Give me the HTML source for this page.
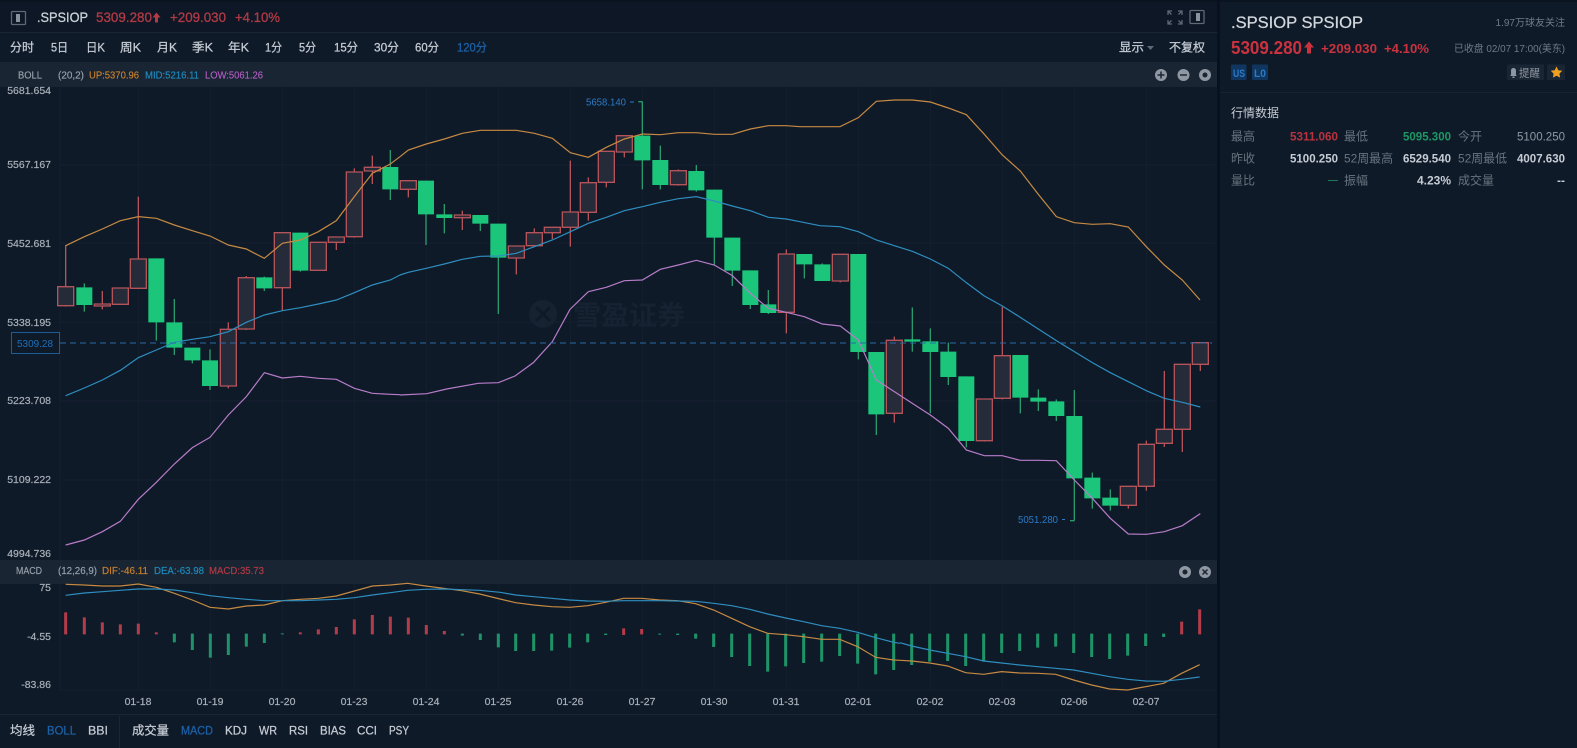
<!DOCTYPE html>
<html lang="zh"><head><meta charset="utf-8"><title>.SPSIOP</title>
<style>
html,body{margin:0;padding:0;background:#0f1a29;width:1577px;height:748px;overflow:hidden}
svg{display:block;filter:blur(.3px)}
text{font-family:"Liberation Sans","Noto Sans CJK SC",sans-serif}
.tab{font-size:12px;fill:#c6ccd4;stroke:#c6ccd4;stroke-width:.25}
.blue{fill:#1c62a8;stroke:#1c62a8}
.ax{font-size:10.5px;fill:#a7afb8;text-anchor:end;stroke:#a7afb8;stroke-width:.2}
.dt{font-size:10.5px;fill:#a7afb8;text-anchor:middle;stroke:#a7afb8;stroke-width:.2}
.lb{font-size:12px;fill:#69747f}
.v{font-size:12px;font-weight:bold;fill:#c6ccd4;text-anchor:end}
.ind{font-size:10px;stroke-width:.15}
.rw{fill:none;stroke:#b5535a;stroke-width:4}
.rb{fill:#262b39;stroke:#b5535a;stroke-width:4}
.gw{fill:none;stroke:#2a9a6c;stroke-width:4}
.gb{fill:none;stroke:#1bc67a;stroke-width:48}
.up{fill:none;stroke:#c68a42;stroke-width:3.6}
.mid{fill:none;stroke:#2e8ebf;stroke-width:3.6}
.low{fill:none;stroke:#b77cc8;stroke-width:3.6}
.mr{fill:none;stroke:#b43c4a;stroke-width:9}
.mg{fill:none;stroke:#1f9368;stroke-width:9}
</style></head><body>
<svg width="1577" height="748" viewBox="0 0 1577 748" xmlns="http://www.w3.org/2000/svg">
<rect width="1577" height="748" fill="#0f1a29"/>
<rect width="1217" height="32" fill="#0d1725"/>
<rect y="0" width="1577" height="2" fill="#0a1320"/>
<rect y="32" width="1217" height="1" fill="#1a2634"/>
<rect y="62" width="1217" height="25" fill="#1a2533"/>
<rect y="560" width="1217" height="24" fill="#1a2533"/>
<rect y="714" width="1217" height="1" fill="#1a2634"/>
<rect x="119" y="716" width="1" height="32" fill="#1a2634"/>
<rect x="1217" width="3" height="748" fill="#08111c"/>
<rect x="1220" y="92" width="357" height="1" fill="#172230"/>

<!-- grid -->
<path fill="none" stroke="#141f2e" d="M60 165H1215M60 243H1215M60 322H1215M60 401H1215M60 480H1215M60 690H1215M60 87V560M138.5 87V560M210.5 87V560M282.5 87V560M354.5 87V560M426.5 87V560M498.5 87V560M570.5 87V560M642.5 87V560M714.5 87V560M786.5 87V560M858.5 87V560M930.5 87V560M1002.5 87V560M1074.5 87V560M1146.5 87V560M60 584V690M138.5 584V690M210.5 584V690M282.5 584V690M354.5 584V690M426.5 584V690M498.5 584V690M570.5 584V690M642.5 584V690M714.5 584V690M786.5 584V690M858.5 584V690M930.5 584V690M1002.5 584V690M1074.5 584V690M1146.5 584V690"/>

<!-- watermark -->
<circle cx="543" cy="314" r="14" fill="#162131"/>
<path d="M536 307l14 14M550 307l-14 14" stroke="#0f1a29" stroke-width="3"/>
<text x="573" y="325" font-size="27" font-weight="bold" fill="#162131" textLength="112" lengthAdjust="spacingAndGlyphs">雪盈证券</text>

<!-- candles 0-18 -->
<g transform="translate(0,90) scale(.33333)">
<path class="rw" d="M197 465V650M307 603V658M361 594V645M415 320V595M685 697V895M739 558V720M847 428V662M955 457V541M1009 440V480M1063 235V443M1117 197V282"/>
<path class="gw" d="M253 580V665M469 505V752M523 627V795M577 773V820M630 778V900M793 560V603M901 428V545M1171 180V330"/>
<path class="rb" d="M173 590H221V647H173ZM283 642H331V648H283ZM337 594H385V643H337ZM391 507H439V595H391ZM661 718H709V888H661ZM715 563H763V717H715ZM823 428H871V593H823ZM931 457H979V541H931ZM985 441H1033V457H985ZM1039 246H1087V440H1039ZM1093 232H1141V243H1093Z"/>
<path class="gb" d="M253 592V645M469 505V697M523 697V773M577 773V811M630 811V888M793 562V595M901 428V542M1171 231V298"/>
</g>
<!-- candles 19-39 -->
<g transform="translate(400,90) scale(.33333)">
<path class="rw" d="M25 270V322M187 362V420M349 468V553M403 415V468M457 412V447M511 212V470M565 262V392M619 183V292M673 137V202M835 238V287"/>
<path class="gw" d="M78 272V465M133 342V430M241 375V423M295 401V672M727 35V298M781 167V298M889 225V305M943 299V525M997 443V588M1051 541V657M1105 600V672M715 35H727"/>
<path class="rb" d="M1 272H49V298H1ZM163 375H211V383H163ZM325 468H373V504H325ZM379 428H427V467H379ZM433 412H481V428H433ZM487 366H535V412H487ZM541 278H589V367H541ZM595 184H643V277H595ZM649 137H697V186H649ZM811 242H859V284H811Z"/>
<path class="gb" d="M78 272V373M133 373V384M241 375V401M295 401V503M727 137V211M781 210V285M889 243V301M943 299V443M997 443V542M1051 541V645M1105 643V669"/>
</g>
<!-- candles 40-63 -->
<g transform="translate(760,230) scale(.33333)">
<path class="rw" d="M79 58V310M241 73V157M403 320V578M673 507V635M727 230V508M1105 769V836M1159 632V782M1213 423V651M1267 403V666M1321 338V423"/>
<path class="gw" d="M133 72V145M187 100V153M295 72V388M349 366V615M457 232V365M511 295V550M565 338V465M619 439V652M781 375V550M835 478V543M889 508V573M943 480V872M997 728V836M1051 778V842M930 872H943"/>
<path class="rb" d="M55 72H103V247H55ZM217 73H265V153H217ZM379 331H427V550H379ZM649 507H697V632H649ZM703 377H751V505H703ZM1081 769H1129V826H1081ZM1135 643H1183V769H1135ZM1189 598H1237V640H1189ZM1243 403H1291V598H1243ZM1297 338H1345V403H1297Z"/>
<path class="gb" d="M133 72V103M187 103V153M295 72V366M349 366V553M457 328V335M511 334V366M565 365V441M619 439V633M781 375V503M835 503V515M889 514V558M943 558V745M997 743V805M1051 803V827"/>
</g>

<!-- BOLL lines -->
<g transform="translate(0,90) scale(.33333)">
<polyline class="up" points="197,467 253,440 307,417 361,392 415,380 469,385 523,405 577,422 630,438 685,465 739,477 793,505 847,460 901,450 955,425 1009,392 1063,320 1117,250 1171,222 1200,200"/>
<polyline class="mid" points="197,917 253,894 307,870 361,841 415,803 469,780 523,757 577,748 630,740 685,725 739,697 793,675 847,662 901,653 955,642 1009,630 1063,608 1117,585 1171,570 1200,555"/>
</g>
<g transform="translate(400,90) scale(.33333)">
<polyline class="up" points="0,200 25,180 79,162 133,147 187,130 241,121 295,121 349,121 403,130 457,145 511,188 565,202 619,172 673,147 727,132 781,134 835,128 889,128 943,133 997,133 1051,117 1105,107 1159,107 1200,110"/>
<polyline class="mid" points="0,555 25,547 79,535 133,522 187,508 241,499 295,498 349,490 403,470 457,450 511,425 565,400 619,382 673,362 727,350 781,337 835,326 889,320 943,333 997,348 1051,362 1105,382 1159,387 1200,395"/>
<polyline class="low" points="565,605 619,592 673,572 727,570 781,538 835,525 889,511 943,525 997,557 1051,610 1105,655"/>
</g>
<g transform="translate(800,90) scale(.33333)">
<polyline class="up" points="0,110 120,110 175,83 229,34 283,30 337,30 391,36 445,54 499,74 553,133 607,195 661,243 715,313 769,380 823,398 877,403 931,401 985,411 1039,470 1093,525 1147,570 1200,630"/>
<polyline class="mid" points="0,395 60,407 120,410 175,425 229,450 283,467 337,484 391,507 445,535 499,578 553,618"/>
</g>
<g transform="translate(760,230) scale(.33333)">
<polyline class="mid" points="673,198 727,228 781,262 835,297 889,332 943,365 997,398 1051,428 1105,455 1159,482 1213,505 1267,517 1321,531"/>
<polyline class="low" points="25,235 79,247 133,260 187,282 241,288 295,330 349,450 403,485 457,520 511,555 565,595 619,660 673,677 727,677 781,691 835,691 889,692 943,750 997,805 1051,865 1105,912 1159,913 1213,905 1267,887 1321,851"/>
</g>
<g transform="translate(0,360) scale(.33333)">
<polyline class="low" points="197,555 253,540 307,515 361,484 415,418 469,367 523,312 577,263 630,232 685,165 739,110 793,38 847,54 901,49 955,55 1009,58 1063,85 1117,100 1171,103 1200,104"/>
</g>
<g transform="translate(380,280) scale(.33333)">
<polyline class="low" points="60,345 140,341 200,327 295,310 355,308 405,288 460,248 517,185 570,88 625,35"/>
</g>

<!-- current price line -->
<path d="M60 343H1212" stroke="#2a6aa8" stroke-dasharray="6 4" fill="none"/>
<rect x="11.500" y="332.500" width="48" height="21" fill="#0f1a29" stroke="#1e5a96"/>
<text x="17" y="347" font-size="10.500" fill="#1e6fb8" textLength="36" lengthAdjust="spacingAndGlyphs">5309.28</text>
<text x="586" y="105.500" font-size="10.500" fill="#2b7bc8" textLength="40" lengthAdjust="spacingAndGlyphs">5658.140</text>
<path d="M630 102h4" stroke="#2b7bc8"/>
<text x="1018" y="523" font-size="10.500" fill="#2b7bc8" textLength="40" lengthAdjust="spacingAndGlyphs">5051.280</text>
<path d="M1062 519.500h3" stroke="#2b7bc8"/>

<!-- MACD -->
<g transform="translate(0,555) scale(.33333)">
<path class="mr" d="M197 172V238M253 187V238M307 202V238M361 208V238M415 206V238M469 232V238M901 232V238M955 223V238M1009 216V238M1063 193V238M1117 180V238M1171 185V238M1225 188V238M1279 210V238M1333 228V238"/>
<path class="mg" d="M523 236V262M577 236V285M631 236V308M685 236V300M739 236V275M793 236V264M847 235V238M1387 236V242M1441 236V255M1495 236V277"/>
</g>
<g transform="translate(500,555) scale(.33333)">
<path class="mr" d="M371 220V240M425 222V238"/>
<path class="mg" d="M47 236V288M101 236V288M155 236V287M209 236V278M263 236V262M317 236V240M479 236V239M533 236V240M587 236V251M641 236V276M695 236V306M749 236V333M803 236V350M857 236V334M911 236V324M965 236V320M1019 236V303M1073 236V326M1127 236V358M1181 236V345"/>
<polyline class="up" points="0,132 47,143 101,150 155,155 209,157 263,152 317,142 371,130 425,130 479,135 533,137 587,146 641,165 695,190 749,215 803,235 857,239 911,245 965,253 1019,253 1073,275 1127,307 1181,315 1200,316"/>
<polyline class="mid" points="0,112 47,120 101,125 155,130 209,135 263,138 317,139 371,137 425,137 479,137 533,138 587,139 641,145 695,152 749,163 803,177 857,189 911,200 965,212 1019,220 1073,232 1127,248 1181,262 1200,265"/>
</g>
<g transform="translate(900,555) scale(.33333)">
<path class="mr" d="M845 200V238M899 163V238"/>
<path class="mg" d="M35 236V330M89 236V320M143 236V318M197 236V333M251 236V320M305 236V294M359 236V288M413 236V278M467 236V275M521 236V294M575 236V306M629 236V312M683 236V302M737 236V273M791 236V246"/>
<polyline class="up" points="0,316 35,318 89,324 143,333 197,353 251,358 305,350 359,354 413,355 467,358 521,375 575,390 629,402 683,405 737,395 791,385 845,355 899,329"/>
<polyline class="mid" points="0,263 35,273 89,285 143,295 197,305 251,318 305,324 359,330 413,335 467,340 521,345 575,355 629,365 683,373 737,378 791,379 845,373 899,366"/>
</g>
<g transform="translate(0,555) scale(.33333)">
<polyline class="up" points="197,88 253,90 307,93 361,93 415,87 469,97 523,115 577,135 630,157 685,162 739,153 793,150 847,137 901,133 955,130 1009,123 1063,108 1117,93 1171,90 1223,85 1277,93 1331,100 1385,107 1439,117 1500,132"/>
<polyline class="mid" points="197,121 253,114 307,110 361,106 415,102 469,102 523,105 577,113 630,122 685,128 739,133 793,137 847,137 901,137 955,135 1009,133 1063,128 1117,120 1171,113 1223,106 1277,103 1331,102 1385,104 1439,106 1500,112"/>
</g>

<!-- header -->
<rect x="11.500" y="11.500" width="14" height="13" rx="1" fill="none" stroke="#5f6975" stroke-width="1.300"/>
<rect x="16" y="14" width="4" height="8" fill="#8a939d"/>
<text x="37" y="22" font-size="14" fill="#ccd2d9" stroke="#ccd2d9" stroke-width=".3" textLength="51" lengthAdjust="spacingAndGlyphs">.SPSIOP</text>
<text x="96" y="22" font-size="14" fill="#b23a45" stroke="#b23a45" stroke-width=".3" textLength="56" lengthAdjust="spacingAndGlyphs">5309.280</text>
<path d="M156.500 12.500l4 5h-2.500v5h-3v-5h-2.500z" fill="#b23a45"/>
<text x="170" y="22" font-size="14" fill="#b23a45" stroke="#b23a45" stroke-width=".3" textLength="56" lengthAdjust="spacingAndGlyphs">+209.030</text>
<text x="235" y="22" font-size="14" fill="#b23a45" stroke="#b23a45" stroke-width=".3" textLength="45" lengthAdjust="spacingAndGlyphs">+4.10%</text>

<g fill="none" stroke="#5f6975" stroke-width="1.300">
<path d="M1168 15v-4h4M1178 11h4v4M1182 20v4h-4M1172 24h-4v-4M1168 11l3.500 3.500M1182 11l-3.500 3.500M1182 24l-3.500-3.500M1168 24l3.500-3.500"/>
<rect x="1190" y="10.500" width="14" height="13" rx="1"/>
</g>
<rect x="1196" y="13" width="4" height="8" fill="#8a939d"/>

<!-- tabs -->
<text class="tab" x="10" y="51.500" textLength="24" lengthAdjust="spacingAndGlyphs">分时</text>
<text class="tab" x="51" y="51.500" textLength="17" lengthAdjust="spacingAndGlyphs">5日</text>
<text class="tab" x="86" y="51.500" textLength="19" lengthAdjust="spacingAndGlyphs">日K</text>
<text class="tab" x="120" y="51.500" textLength="21" lengthAdjust="spacingAndGlyphs">周K</text>
<text class="tab" x="157" y="51.500" textLength="20" lengthAdjust="spacingAndGlyphs">月K</text>
<text class="tab" x="192" y="51.500" textLength="21" lengthAdjust="spacingAndGlyphs">季K</text>
<text class="tab" x="228" y="51.500" textLength="21" lengthAdjust="spacingAndGlyphs">年K</text>
<text class="tab" x="265" y="51.500" textLength="17" lengthAdjust="spacingAndGlyphs">1分</text>
<text class="tab" x="299" y="51.500" textLength="17" lengthAdjust="spacingAndGlyphs">5分</text>
<text class="tab" x="334" y="51.500" textLength="24" lengthAdjust="spacingAndGlyphs">15分</text>
<text class="tab" x="374" y="51.500" textLength="25" lengthAdjust="spacingAndGlyphs">30分</text>
<text class="tab" x="415" y="51.500" textLength="24" lengthAdjust="spacingAndGlyphs">60分</text>
<text class="tab blue" x="457" y="51.500" textLength="30" lengthAdjust="spacingAndGlyphs">120分</text>
<text class="tab" x="1119" y="51.500" textLength="25" lengthAdjust="spacingAndGlyphs">显示</text>
<path d="M1147 46h7l-3.500 4z" fill="#5f6975"/>
<text class="tab" x="1169" y="51.500" textLength="36" lengthAdjust="spacingAndGlyphs">不复权</text>

<!-- BOLL strip -->
<text class="ind" x="18" y="78.500" fill="#98a2ad" stroke="#98a2ad" textLength="24" lengthAdjust="spacingAndGlyphs">BOLL</text>
<text class="ind" x="58" y="78.500" fill="#98a2ad" stroke="#98a2ad" textLength="26" lengthAdjust="spacingAndGlyphs">(20,2)</text>
<text class="ind" x="89" y="78.500" fill="#c9802c" stroke="#c9802c" textLength="50" lengthAdjust="spacingAndGlyphs">UP:5370.96</text>
<text class="ind" x="145" y="78.500" fill="#1d8cc0" stroke="#1d8cc0" textLength="54" lengthAdjust="spacingAndGlyphs">MID:5216.11</text>
<text class="ind" x="205" y="78.500" fill="#b05cc0" stroke="#b05cc0" textLength="58" lengthAdjust="spacingAndGlyphs">LOW:5061.26</text>
<g fill="#8f98a2">
<circle cx="1161" cy="75" r="6"/><circle cx="1183.500" cy="75" r="6"/><circle cx="1205" cy="75" r="6"/>
<circle cx="1185" cy="572" r="6"/><circle cx="1205" cy="572" r="6"/>
</g>
<path d="M1157.500 75h7M1161 71.500v7M1180 75h7" stroke="#1a2533" stroke-width="1.500"/>
<circle cx="1205" cy="75" r="2.500" fill="#1a2533"/>
<circle cx="1185" cy="572" r="2.500" fill="#1a2533"/>
<path d="M1202.500 569.500l5 5M1207.500 569.500l-5 5" stroke="#1a2533" stroke-width="1.500"/>

<!-- axis -->
<text class="ax" x="51" y="94">5681.654</text>
<text class="ax" x="51" y="168">5567.167</text>
<text class="ax" x="51" y="247">5452.681</text>
<text class="ax" x="51" y="326">5338.195</text>
<text class="ax" x="51" y="404">5223.708</text>
<text class="ax" x="51" y="483">5109.222</text>
<text class="ax" x="51" y="557">4994.736</text>
<text class="ax" x="51" y="591">75</text>
<text class="ax" x="51" y="640">-4.55</text>
<text class="ax" x="51" y="688">-83.86</text>

<!-- MACD strip -->
<text class="ind" x="16" y="574" fill="#98a2ad" stroke="#98a2ad" textLength="26" lengthAdjust="spacingAndGlyphs">MACD</text>
<text class="ind" x="58" y="574" fill="#98a2ad" stroke="#98a2ad" textLength="39" lengthAdjust="spacingAndGlyphs">(12,26,9)</text>
<text class="ind" x="102" y="574" fill="#c9802c" stroke="#c9802c" textLength="46" lengthAdjust="spacingAndGlyphs">DIF:-46.11</text>
<text class="ind" x="154" y="574" fill="#1d8cc0" stroke="#1d8cc0" textLength="50" lengthAdjust="spacingAndGlyphs">DEA:-63.98</text>
<text class="ind" x="209" y="574" fill="#b33a45" stroke="#b33a45" textLength="55" lengthAdjust="spacingAndGlyphs">MACD:35.73</text>

<!-- dates -->
<text class="dt" x="138" y="705">01-18</text><text class="dt" x="210" y="705">01-19</text><text class="dt" x="282" y="705">01-20</text><text class="dt" x="354" y="705">01-23</text><text class="dt" x="426" y="705">01-24</text><text class="dt" x="498" y="705">01-25</text><text class="dt" x="570" y="705">01-26</text><text class="dt" x="642" y="705">01-27</text><text class="dt" x="714" y="705">01-30</text><text class="dt" x="786" y="705">01-31</text><text class="dt" x="858" y="705">02-01</text><text class="dt" x="930" y="705">02-02</text><text class="dt" x="1002" y="705">02-03</text><text class="dt" x="1074" y="705">02-06</text><text class="dt" x="1146" y="705">02-07</text>

<!-- bottom tabs -->
<text class="tab" x="10" y="734.500" textLength="25" lengthAdjust="spacingAndGlyphs">均线</text>
<text class="tab blue" x="47" y="734.500" textLength="29" lengthAdjust="spacingAndGlyphs">BOLL</text>
<text class="tab" x="88" y="734.500" textLength="20" lengthAdjust="spacingAndGlyphs">BBI</text>
<text class="tab" x="132" y="734.500" textLength="37" lengthAdjust="spacingAndGlyphs">成交量</text>
<text class="tab blue" x="181" y="734.500" textLength="32" lengthAdjust="spacingAndGlyphs">MACD</text>
<text class="tab" x="225" y="734.500" textLength="22" lengthAdjust="spacingAndGlyphs">KDJ</text>
<text class="tab" x="259" y="734.500" textLength="18" lengthAdjust="spacingAndGlyphs">WR</text>
<text class="tab" x="289" y="734.500" textLength="19" lengthAdjust="spacingAndGlyphs">RSI</text>
<text class="tab" x="320" y="734.500" textLength="26" lengthAdjust="spacingAndGlyphs">BIAS</text>
<text class="tab" x="357" y="734.500" textLength="20" lengthAdjust="spacingAndGlyphs">CCI</text>
<text class="tab" x="389" y="734.500" textLength="20" lengthAdjust="spacingAndGlyphs">PSY</text>

<!-- right panel -->
<text x="1231" y="28" font-size="17" fill="#d3d8de" stroke="#d3d8de" stroke-width=".25" textLength="132" lengthAdjust="spacingAndGlyphs">.SPSIOP SPSIOP</text>
<text x="1565" y="26" font-size="10" fill="#6f7a87" text-anchor="end">1.97万球友关注</text>
<text x="1231" y="54" font-size="18" font-weight="bold" fill="#c9323e" textLength="71" lengthAdjust="spacingAndGlyphs">5309.280</text>
<path d="M1309 41.500l5 6h-3v6h-4v-6h-3z" fill="#c9323e"/>
<text x="1321" y="53" font-size="13" font-weight="bold" fill="#c9323e" textLength="56" lengthAdjust="spacingAndGlyphs">+209.030</text>
<text x="1384" y="53" font-size="13" font-weight="bold" fill="#c9323e" textLength="45" lengthAdjust="spacingAndGlyphs">+4.10%</text>
<text x="1565" y="52" font-size="10" fill="#6f7a87" text-anchor="end" textLength="111" lengthAdjust="spacingAndGlyphs">已收盘 02/07 17:00(美东)</text>

<rect x="1231" y="64.500" width="15.500" height="15.500" rx="1" fill="#10365f"/>
<text x="1233" y="77" font-size="11" font-weight="bold" fill="#2a7ac8" textLength="12" lengthAdjust="spacingAndGlyphs">US</text>
<rect x="1252" y="64.500" width="16" height="15.500" rx="1" fill="#10365f"/>
<text x="1254" y="77" font-size="11" font-weight="bold" fill="#2a7ac8" textLength="12" lengthAdjust="spacingAndGlyphs">L0</text>

<rect x="1507" y="64.500" width="37" height="15.500" rx="1" fill="#1a2533"/>
<path d="M1510 76c1.500-1 1-2 1-5 0-2 1-3 2.500-3s2.500 1 2.500 3c0 3-.5 4 1 5z" fill="#8f98a2"/>
<rect x="1512.500" y="76.500" width="2" height="1.500" fill="#8f98a2"/>
<text x="1519" y="76.500" font-size="10.500" fill="#8f98a2" textLength="21" lengthAdjust="spacingAndGlyphs">提醒</text>
<rect x="1547" y="64.500" width="18" height="15.500" rx="1" fill="#1a2533"/>
<path d="M1556.500 66.500l1.800 3.700 4 .6-2.900 2.800.7 4-3.600-1.900-3.600 1.900.7-4-2.900-2.800 4-.6z" fill="#f0a020"/>

<text x="1231" y="117" font-size="12" fill="#c6ccd4" textLength="48" lengthAdjust="spacingAndGlyphs">行情数据</text>

<text class="lb" x="1231" y="140.500" textLength="24" lengthAdjust="spacingAndGlyphs">最高</text>
<text class="v" x="1338" y="140.500" style="fill:#b8323f" textLength="48" lengthAdjust="spacingAndGlyphs">5311.060</text>
<text class="lb" x="1344" y="140.500" textLength="24" lengthAdjust="spacingAndGlyphs">最低</text>
<text class="v" x="1451" y="140.500" style="fill:#1e9663" textLength="48" lengthAdjust="spacingAndGlyphs">5095.300</text>
<text class="lb" x="1458" y="140.500" textLength="24" lengthAdjust="spacingAndGlyphs">今开</text>
<text class="v" x="1565" y="140.500" style="fill:#8f98a2;font-weight:normal" textLength="48" lengthAdjust="spacingAndGlyphs">5100.250</text>

<text class="lb" x="1231" y="162.500" textLength="24" lengthAdjust="spacingAndGlyphs">昨收</text>
<text class="v" x="1338" y="162.500" textLength="48" lengthAdjust="spacingAndGlyphs">5100.250</text>
<text class="lb" x="1344" y="162.500" textLength="49" lengthAdjust="spacingAndGlyphs">52周最高</text>
<text class="v" x="1451" y="162.500" textLength="48" lengthAdjust="spacingAndGlyphs">6529.540</text>
<text class="lb" x="1458" y="162.500" textLength="49" lengthAdjust="spacingAndGlyphs">52周最低</text>
<text class="v" x="1565" y="162.500" textLength="48" lengthAdjust="spacingAndGlyphs">4007.630</text>

<text class="lb" x="1231" y="184.500" textLength="24" lengthAdjust="spacingAndGlyphs">量比</text>
<path d="M1328 180.500h10" stroke="#1e7a58"/>
<text class="lb" x="1344" y="184.500" textLength="24" lengthAdjust="spacingAndGlyphs">振幅</text>
<text class="v" x="1451" y="184.500">4.23%</text>
<text class="lb" x="1458" y="184.500" textLength="36" lengthAdjust="spacingAndGlyphs">成交量</text>
<text class="v" x="1565" y="184.500">--</text>
</svg>
</body></html>
